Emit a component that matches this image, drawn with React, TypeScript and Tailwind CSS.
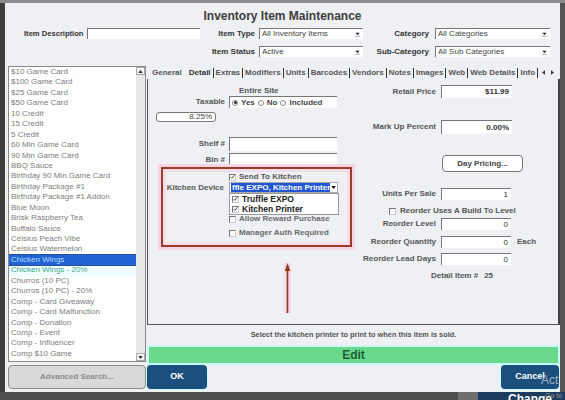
import { Fragment, ReactNode } from 'react'

const items = [
  '$10 Game Card',
  '$100 Game Card',
  '$25 Game Card',
  '$50 Game Card',
  '10 Credit',
  '15 Credit',
  '5 Credit',
  '60 Min Game Card',
  '90 Min Game Card',
  'BBQ Sauce',
  'Birthday 90 Min Game Card',
  'Birthday Package #1',
  'Birthday Package #1 Addon',
  'Blue Moon',
  'Brisk Raspberry Tea',
  'Buffalo Sauce',
  'Celsius Peach Vibe',
  'Celsius Watermelon',
  'Chicken Wings',
  'Chicken Wings - 20%',
  'Churros (10 PC)',
  'Churros (10 PC) - 20%',
  'Comp - Card Giveaway',
  'Comp - Card Malfunction',
  'Comp - Donation',
  'Comp - Event',
  'Comp - Influencer',
  'Comp $10 Game',
  'Comp $100 Game',
]

const tabs = ['Extras', 'Modifiers', 'Units', 'Barcodes', 'Vendors', 'Notes', 'Images', 'Web', 'Web Details', 'Info', 'Inventory']

function Check({ on }: { on?: boolean }) {
  return (
    <span className="w-[7px] h-[7px] shrink-0 bg-white border-t border-l border-[#777] border-r border-b border-r-[#ccc] border-b-[#ccc] flex items-center justify-center">
      {on && (
        <svg viewBox="0 0 8 8" className="w-[6px] h-[6px]">
          <path d="M1 4.2l2 2L7 1" stroke="#333" strokeWidth="1.4" fill="none" />
        </svg>
      )}
    </span>
  )
}

function Radio({ on }: { on?: boolean }) {
  return (
    <span className="w-[6px] h-[6px] rounded-full border border-[#888] bg-white flex items-center justify-center shrink-0">
      {on && <span className="w-[3px] h-[3px] rounded-full bg-[#333]" />}
    </span>
  )
}

function Field({ className, children }: { className?: string; children?: ReactNode }) {
  return (
    <div className={'bg-white border-t border-l border-[#777] flex items-center text-[8px] ' + (className ?? '')}>
      {children}
    </div>
  )
}

function Arrow() {
  return (
    <svg viewBox="0 0 8 6" className="w-[7px] h-[6px] shrink-0">
      <path d="M1.5 1.5h5L4 4z" fill="#222" />
      <path d="M1 5.5h6" stroke="#888" strokeWidth="0.8" />
    </svg>
  )
}

function Select({ className, value }: { className?: string; value: string }) {
  return (
    <Field className={'h-[11px] pl-[2px] pr-[2px] ' + (className ?? '')}>
      <span className="flex-1 truncate text-[#444]">{value}</span>
      <Arrow />
    </Field>
  )
}

function Row({ label, w, className, children }: { label: string; w: string; className?: string; children: ReactNode }) {
  return (
    <div className={'flex items-center ' + (className ?? '')}>
      <span className={'text-right font-bold text-[8px] text-[#555] whitespace-nowrap ' + w}>{label}</span>
      {children}
    </div>
  )
}

export default function App() {
  return (
    <div className="w-[565px] h-[400px] overflow-hidden relative bg-[#4b4b4b] font-['Liberation_Sans',Arial,sans-serif]">
      <div className="h-[3px] bg-[#8c8c8c]" />
      <div className="flex">
        <div className="w-[5px] h-[389px] bg-[#3e3e3e]" />
        <div className="w-[555px] h-[389px] bg-[#eef0f4] flex flex-col">
          {/* title */}
          <div className="h-[25px] flex items-center justify-center text-[12px] font-bold text-[#3d3d3d]">
            Inventory Item Maintenance
          </div>

          {/* filters */}
          <div className="h-[11px] flex items-center text-[8px] font-bold text-[#333]">
            <span className="ml-[19px] w-[63px] whitespace-nowrap text-[7.6px]">Item Description</span>
            <Field className="w-[113px] h-[11px]" />
            <span className="w-[55px] text-right whitespace-nowrap">Item Type</span>
            <Select className="ml-[4px] w-[104px] font-normal" value="All Inventory Items" />
            <span className="w-[66px] text-right whitespace-nowrap">Category</span>
            <Select className="ml-[6px] w-[115px] font-normal" value="All Categories" />
          </div>
          <div className="mt-[7px] h-[11px] flex items-center text-[8px] font-bold text-[#333]">
            <span className="w-[195px]" />
            <span className="w-[55px] text-right whitespace-nowrap">Item Status</span>
            <Select className="ml-[4px] w-[104px] font-normal" value="Active" />
            <span className="w-[66px] text-right whitespace-nowrap">Sub-Category</span>
            <Select className="ml-[6px] w-[115px] font-normal" value="All Sub Categories" />
          </div>

          {/* body */}
          <div className="mt-[9px] flex">
            {/* item list */}
            <div className="ml-[3px] w-[138px] flex flex-col">
              <div className="h-[296px] bg-white border border-[#8a8a8a] flex overflow-hidden">
                <div className="flex-1 overflow-hidden">
                  {items.map((it, i) => (
                    <div
                      key={it}
                      className={
                        'h-[10.44px] leading-[10.44px] pl-[2px] text-[8px] whitespace-nowrap ' +
                        (i === 18
                          ? 'bg-[#1f63d5] text-[#b3dcf8] outline outline-1 outline-[#2c4f95]'
                          : i === 19
                          ? 'bg-[#f0fdff] text-[#42a88a]'
                          : 'text-[#7d7d7d]')
                      }
                    >
                      {it}
                    </div>
                  ))}
                </div>
                <div className="w-[9px] bg-[#e8e8e8] flex flex-col justify-between">
                  <div className="h-[8px] bg-[#f4f4f4] border border-[#aaa] flex items-center justify-center">
                    <svg viewBox="0 0 6 4" className="w-[5px] h-[3px]"><path d="M0 4L3 0l3 4z" fill="#333" /></svg>
                  </div>
                  <div className="h-[8px] bg-[#f4f4f4] border border-[#aaa] flex items-center justify-center">
                    <svg viewBox="0 0 6 4" className="w-[5px] h-[3px]"><path d="M0 0l3 4 3-4z" fill="#333" /></svg>
                  </div>
                </div>
              </div>
              <div className="mt-[3px] h-[24px] rounded-[4px] bg-[#d9d9d9] border border-[#8c8c8c] flex items-center justify-center text-[8px] font-bold text-[#8a8a8a]">
                Advanced Search...
              </div>
            </div>

            {/* detail */}
            <div className="ml-[1px] w-[413px] flex flex-col">
              <div className="h-[13px] flex items-center text-[8px] font-bold text-[#555] whitespace-nowrap">
                <div className="flex-1 overflow-hidden flex items-center pl-[5px]">
                  <span>General</span>
                  <span className="ml-[7px] text-[#333]">Detail</span>
                  {tabs.map((t) => (
                    <Fragment key={t}>
                      <span className="w-px h-[10px] bg-[#333] mx-[2px] shrink-0" />
                      <span>{t}</span>
                    </Fragment>
                  ))}
                </div>
                <div className="w-[19px] mr-[2px] pl-[3px] flex items-center gap-[6px]">
                  <svg viewBox="0 0 4 6" className="w-[3px] h-[5px]"><path d="M4 0L0 3l4 3z" fill="#333" /></svg>
                  <svg viewBox="0 0 4 6" className="w-[3px] h-[5px]"><path d="M0 0l4 3-4 3z" fill="#333" /></svg>
                </div>
              </div>

              <div className="h-[246px] border-l border-b border-[#555] border-r-2 border-r-[#444] flex">
                {/* left half */}
                <div className="w-[209px] flex flex-col text-[8px]">
                  <div className="mt-[7px] h-[10px] leading-[10px] pl-[91px] font-bold text-[#555]">Entire Site</div>
                  <Row label="Taxable" w="w-[77px]" className="h-[12px]">
                    <Field className="ml-[4px] w-[108px] h-[12px] pl-[2px] gap-[3px] font-bold text-[#444]">
                      <Radio on />
                      <span>Yes</span>
                      <Radio />
                      <span>No</span>
                      <Radio />
                      <span>Included</span>
                    </Field>
                  </Row>
                  <div className="mt-[4px] ml-[8px] w-[60px] h-[10px] rounded-[3px] border border-[#777] bg-white flex items-center justify-end pr-[3px] text-[#444]">
                    8.25%
                  </div>
                  <Row label="Shelf #" w="w-[77px]" className="mt-[15px] h-[14px]">
                    <Field className="ml-[4px] w-[108px] h-[14px]" />
                  </Row>
                  <Row label="Bin #" w="w-[77px]" className="mt-[2px] h-[13px]">
                    <Field className="ml-[4px] w-[108px] h-[13px]" />
                  </Row>

                  {/* highlighted kitchen box */}
                  <div className="mt-[1px] ml-[13px] w-[191px] h-[80px] border-2 border-[#9b3d26] shadow-[0_0_0_3px_#f7d3e6,inset_0_0_0_3px_#f5dcea] relative flex flex-col">
                    <div className="mt-[3px] h-[10px] pl-[66px] flex items-center gap-[3px] font-bold text-[#555]">
                      <Check on />
                      <span>Send To Kitchen</span>
                    </div>
                    <Row label="Kitchen Device" w="w-[61px]" className="h-[11px]">
                      <div className="ml-[5px] w-[109px] h-[11px] bg-white border border-[#aaa] flex items-center pl-[1px]">
                        <span className="bg-[#2157d2] text-white font-bold px-[1px] leading-[9px] whitespace-nowrap overflow-hidden w-[99px]">
                          ffle EXPO, Kitchen Printer
                        </span>
                        <span className="ml-auto w-[7px] h-[9px] bg-white flex items-center justify-center">
                          <svg viewBox="0 0 6 4" className="w-[5px] h-[3px]"><path d="M0 0l3 4 3-4z" fill="#111" /></svg>
                        </span>
                      </div>
                    </Row>
                    <div className="mt-[21px] h-[10px] pl-[66px] flex items-center gap-[3px] font-bold text-[#6a6a6a]">
                      <Check />
                      <span>Allow Reward Purchase</span>
                    </div>
                    <div className="mt-[4px] h-[10px] pl-[66px] flex items-center gap-[3px] font-bold text-[#6a6a6a]">
                      <Check />
                      <span>Manager Auth Required</span>
                    </div>

                    <div className="absolute top-[24px] left-[66px] w-[110px] h-[22px] bg-white border border-[#9a9a9a] flex flex-col justify-center font-bold text-[#222] text-[8.5px]">
                      <div className="h-[10px] flex items-center gap-[3px] pl-[2px]">
                        <Check on />
                        <span>Truffle EXPO</span>
                      </div>
                      <div className="h-[10px] flex items-center gap-[3px] pl-[2px]">
                        <Check on />
                        <span>Kitchen Printer</span>
                      </div>
                    </div>
                  </div>

                  <div className="mt-[16px] ml-[136px] w-[7px] h-[50px] bg-[#f8d6e8]">
                    <svg viewBox="0 0 7 50" className="w-[7px] h-[50px]">
                      <path d="M3.5 50V5" stroke="#8a3a1c" strokeWidth="1.6" />
                      <path d="M0.8 8L3.5 0l2.7 8z" fill="#8a3a1c" />
                    </svg>
                  </div>
                </div>

                {/* right half */}
                <div className="flex-1 flex flex-col text-[8px]">
                  <Row label="Retail Price" w="w-[79px]" className="mt-[6px] h-[13px]">
                    <Field className="ml-[5px] w-[71px] h-[13px] justify-end pr-[3px] font-bold text-[#333]">$11.99</Field>
                  </Row>
                  <Row label="Mark Up Percent" w="w-[79px]" className="mt-[22px] h-[14px]">
                    <Field className="ml-[5px] w-[71px] h-[14px] justify-end pr-[3px] font-bold text-[#333]">0.00%</Field>
                  </Row>
                  <div className="mt-[21px] ml-[85px] w-[81px] h-[17px] rounded-[4px] border border-[#777] bg-white flex items-center justify-center font-bold text-[#444]">
                    Day Pricing...
                  </div>
                  <Row label="Units Per Sale" w="w-[79px]" className="mt-[16px] h-[12px]">
                    <Field className="ml-[5px] w-[70px] h-[12px] justify-end pr-[3px] text-[#333]">1</Field>
                  </Row>
                  <div className="mt-[6px] h-[10px] pl-[32px] flex items-center gap-[4px] font-bold text-[#555]">
                    <Check />
                    <span>Reorder Uses A Build To Level</span>
                  </div>
                  <Row label="Reorder Level" w="w-[79px]" className="mt-[2px] h-[12px]">
                    <Field className="ml-[5px] w-[70px] h-[12px] justify-end pr-[3px] text-[#333]">0</Field>
                  </Row>
                  <Row label="Reorder Quantity" w="w-[79px]" className="mt-[6px] h-[12px]">
                    <Field className="ml-[5px] w-[70px] h-[12px] justify-end pr-[3px] text-[#333]">0</Field>
                    <span className="ml-[6px] font-bold text-[#555]">Each</span>
                  </Row>
                  <Row label="Reorder Lead Days" w="w-[79px]" className="mt-[5px] h-[12px]">
                    <Field className="ml-[5px] w-[70px] h-[12px] justify-end pr-[3px] text-[#333]">0</Field>
                  </Row>
                  <div className="mt-[6px] h-[10px] pl-[74px] flex items-center font-bold text-[#555]">
                    <span>Detail Item #</span>
                    <span className="ml-[6px]">25</span>
                  </div>
                </div>
              </div>

              <div className="h-[20px] flex items-center justify-center text-[7.4px] font-bold text-[#555]">
                Select the kitchen printer to print to when this item is sold.
              </div>
              <div className="h-[20px] border-2 border-[#c8fbf3] bg-[#6bd98c] flex items-center justify-center text-[12px] font-bold text-[#1d5e37]">
                Edit
              </div>
              <div className="h-[24px] flex justify-between">
                <div className="w-[60px] rounded-[4px] bg-[#1b4f7d] shadow-[0_0_0_1px_#c8fbf3] flex items-center justify-center text-[9px] font-bold text-white">
                  OK
                </div>
                <div className="mr-[1px] w-[58px] rounded-[4px] bg-[#1b4f7d] shadow-[0_0_0_1px_#c8fbf3] flex items-center justify-center text-[9px] font-bold text-white">
                  Cancel
                </div>
              </div>
            </div>
          </div>
        </div>
        <div className="w-[5px] h-[389px] bg-[#555]" />
      </div>

      {/* taskbar strip */}
      <div className="h-[8px] flex">
        <div className="flex-1 bg-[#4f4f4f]" />
        <div className="w-[20px] bg-[#6d6d6d]" />
        <div className="w-[87px] bg-[#1c3a5d] overflow-hidden pl-[30px]">
          <span className="block text-[12px] font-bold text-white leading-[12px] mt-[1px]">Change</span>
        </div>
      </div>

      <span className="absolute left-[541px] top-[374px] text-[12px] text-[#a7b1c1] leading-none">Act</span>
      <span className="absolute left-[545px] top-[392px] text-[7px] text-[#a0a0a0] leading-none">Go to</span>
    </div>
  )
}
